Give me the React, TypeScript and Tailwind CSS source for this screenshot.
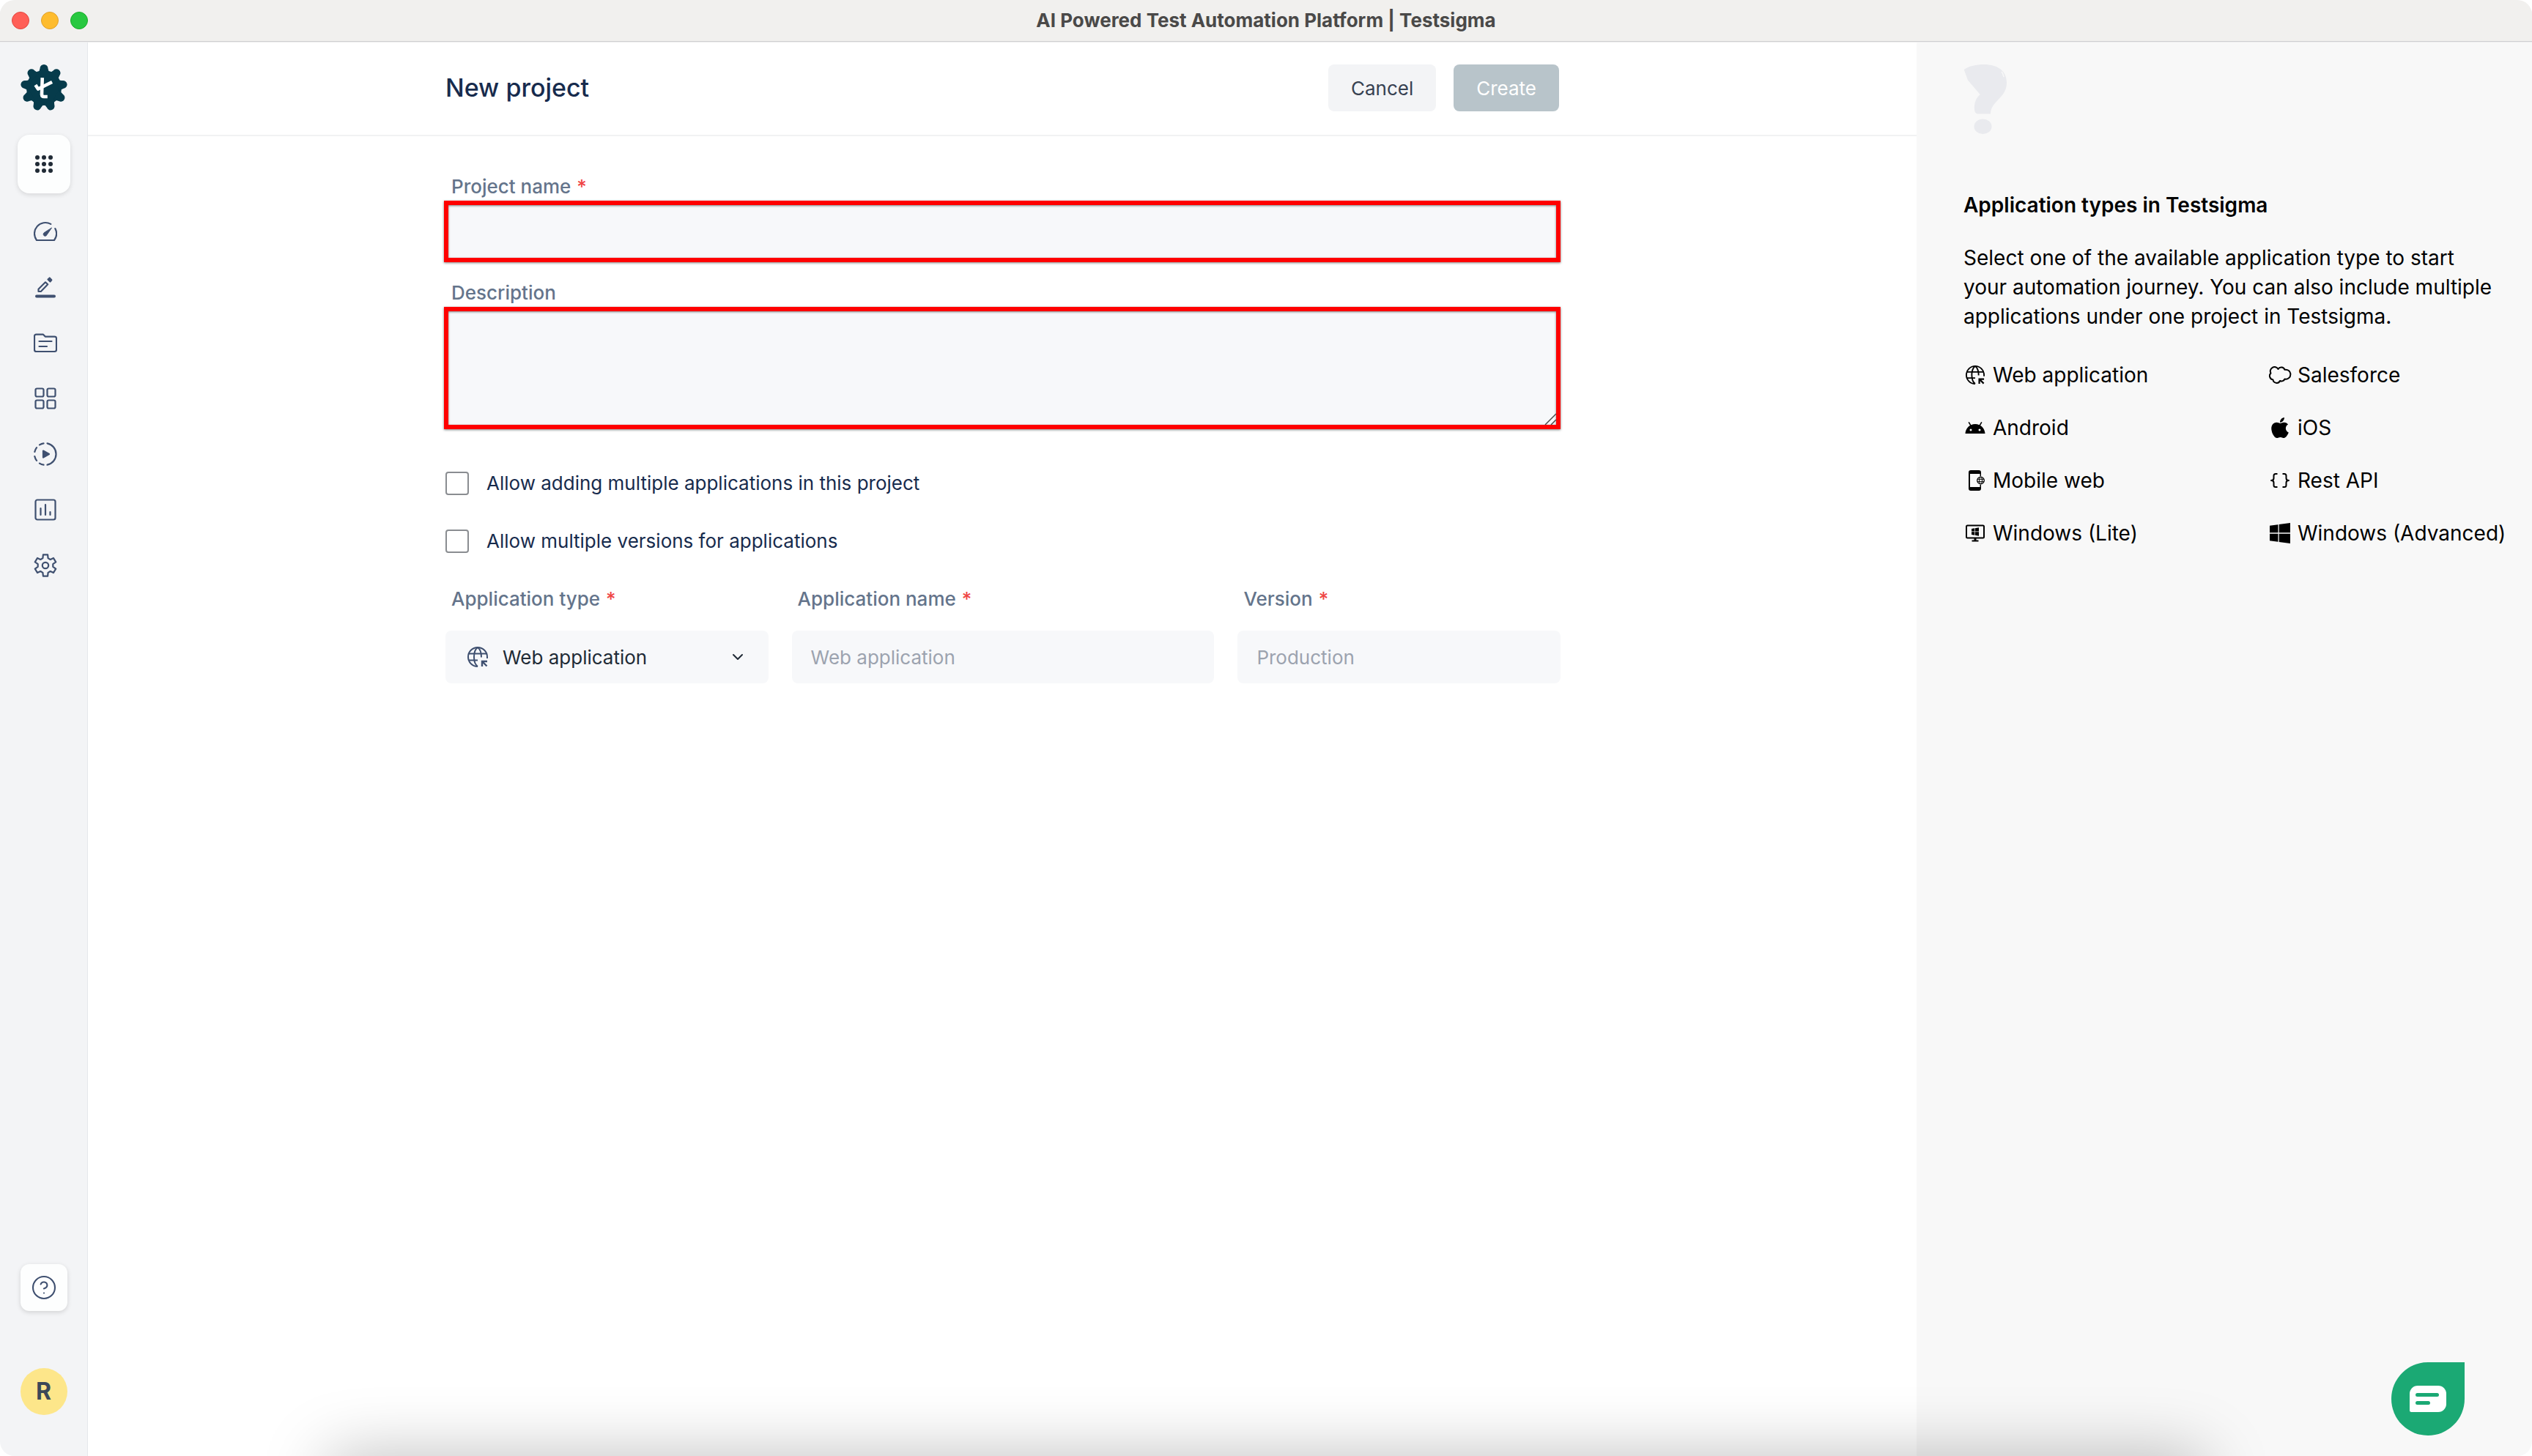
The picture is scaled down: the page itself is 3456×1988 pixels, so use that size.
import type { ReactNode, SVGProps } from "react";
import { ChevronDown, CircleHelp } from "lucide-react";
import { FaApple, FaWindows } from "react-icons/fa";

const LOBES = [0, 40, 80, 120, 160, 200, 240, 280, 320];

function Logo() {
  return (
    <svg viewBox="0 0 64 64" className="size-16">
      <circle cx="32" cy="32" r="24" fill="#063b4b" />
      {LOBES.map((a) => (
        <path key={a} d="M23 13 Q26 10 26.500 5.500 A5.500 5.500 0 0 1 37.500 5.500 Q38 10 41 13 Z" fill="#063b4b" transform={`rotate(${a} 32 32)`} />
      ))}
      <g fill="none" stroke="#fff" strokeWidth="4.600" strokeLinecap="square" strokeLinejoin="round">
        <path d="M29.700 20.500 L29 41 Q29.200 44 32 44 H34.500" />
        <path d="M21.700 30 L24 33.500 L41 25" />
      </g>
    </svg>
  );
}

function NavSvg({ children, ...props }: SVGProps<SVGSVGElement>) {
  return (
    <svg
      viewBox="0 0 32 32"
      className="size-8"
      fill="none"
      stroke="#3f5070"
      strokeWidth="2.200"
      strokeLinecap="round"
      strokeLinejoin="round"
      {...props}
    >
      {children}
    </svg>
  );
}

function AppsIcon() {
  return (
    <svg viewBox="0 0 24 24" className="size-6" fill="#212b36">
      {[3, 12, 21].map((y) => [3, 12, 21].map((x) => <circle key={`${x}-${y}`} cx={x} cy={y} r="3" />))}
    </svg>
  );
}

function GlobeCursor({ className }: { className: string }) {
  return (
    <svg viewBox="0 0 28 28" className={className} fill="none" stroke="currentColor" strokeWidth="2">
      <path d="M14 27 A13 13 0 1 1 27 14 V16" />
      <path d="M14 27 C10.500 24.500 9 19.500 9 14 C9 8 10.500 3.500 14 1 C17.500 3.500 19 8 19 14.500" />
      <path d="M2 9.500 H26 M2 18.500 H14" />
      <path d="M20 27 V20 H27 M20.500 20.500 L26.500 26.500" strokeWidth="2.400" />
    </svg>
  );
}

function AndroidIcon() {
  return (
    <svg viewBox="0 0 28 28" className="size-7">
      <path d="M0.500 22 C1 16.500 3.500 13 7 11 L4.500 6.700 L5.800 6 L8.400 10.200 C12 8.700 16 8.700 19.600 10.200 L22.200 6 L23.500 6.700 L21 11 C24.500 13 27 16.500 27.500 22 Z" fill="#000" />
      <circle cx="8" cy="17" r="1.500" fill="#f8f8f8" />
      <circle cx="20" cy="17" r="1.500" fill="#f8f8f8" />
    </svg>
  );
}

function MobileWebIcon() {
  return (
    <svg viewBox="0 0 28 28" className="size-7" fill="none" stroke="#000">
      <path d="M22 8 V3 Q22 0 19 0 H8 Q5 0 5 3 V25 Q5 28 8 28 H19 Q22 28 22 25 V20 H20.500 V23 H7 V5 H20.500 V8 Z" fill="#000" stroke="none" />
      <circle cx="21.500" cy="14" r="4.800" strokeWidth="1.300" />
      <ellipse cx="21.500" cy="14" rx="2" ry="4.800" />
      <path d="M17 12.300 H26 M17 15.700 H26" />
    </svg>
  );
}

function WindowsLiteIcon() {
  return (
    <svg viewBox="0 0 28 28" className="size-7" fill="#000">
      <rect x="2" y="3.500" width="24" height="17" rx="1.500" fill="none" stroke="#000" strokeWidth="2" />
      <path d="M12.500 20 H15.500 V23.500 H18.500 V25.500 H9.500 V23.500 H12.500 Z" />
      <path d="M9 8 L13 7.300 V11.600 H9 Z M13.700 7.200 L19 6.300 V11.600 H13.700 Z M9 12.300 H13 V16.700 L9 16 Z M13.700 12.300 H19 V17.700 L13.700 16.800 Z" />
    </svg>
  );
}

function SalesforceIcon() {
  return (
    <svg viewBox="0 0 32 24" className="h-6 w-8" fill="none" stroke="#000" strokeWidth="2" strokeLinejoin="round">
      <path d="M13.500 4 A5.500 5.500 0 0 0 3.500 9.500 A5.300 5.300 0 0 0 6.500 18.500 A5 5 0 0 0 16 20 A4.800 4.800 0 0 0 22.500 17.500 A6.500 6.500 0 1 0 22.500 4.800 A5 5 0 0 0 13.500 4 Z" />
    </svg>
  );
}

function BracesIcon() {
  return (
    <svg viewBox="0 0 28 28" className="size-7" fill="none" stroke="#000" strokeWidth="2" strokeLinejoin="round">
      <path d="M10.500 5 H8 Q5.500 5 5.500 7.500 V11 Q5.500 14 2 14 Q5.500 14 5.500 17 V20.500 Q5.500 23 8 23 H10.500" />
      <path d="M17.500 5 H20 Q22.500 5 22.500 7.500 V11 Q22.500 14 26 14 Q22.500 14 22.500 17 V20.500 Q22.500 23 20 23 H17.500" />
    </svg>
  );
}

function QuestionArt() {
  return (
    <svg viewBox="0 0 60 96" className="h-24 w-[60px]" fill="#e9eaee">
      <path d="M0.700 7 C8 2 17 0 28 0 C47 0 59 9 59 25 C59 46 37 50 37 67.500 H19 Q15.500 66.500 15 62 C14.500 52 17 46 22.700 41 L6 21.500 Z" />
      <ellipse cx="26.500" cy="84.700" rx="12" ry="10.300" />
      <path d="M52 10 Q54 12 55 17" fill="none" stroke="#f8f8f8" strokeWidth="1.600" />
    </svg>
  );
}

const navItems: { label: string; icon: ReactNode }[] = [
  {
    label: "Dashboard",
    icon: (
      <NavSvg>
        <path d="M23.300 5.900 A15 15 0 0 0 4 28 H28 A15 15 0 0 0 29.300 12.100" />
        <path d="M24.300 11.400 L18 20.500 A2.500 2.500 0 1 1 14.500 17.500 Z" fill="#3f5070" strokeWidth="1" />
      </NavSvg>
    ),
  },
  {
    label: "Create tests",
    icon: (
      <NavSvg>
        <path d="M6.500 22 V18.700 L16 9.300 L19.200 12.300 L9.800 22 Z" />
        <path d="M19.500 5.500 L21.700 3.500 L24.300 6.300 L22.500 8.500 Z" fill="#3f5070" />
        <path d="M4 28.500 H28" strokeWidth="4" />
      </NavSvg>
    ),
  },
  {
    label: "Test plans",
    icon: (
      <NavSvg>
        <path d="M3.500 4.700 H13 L16 7.700 H28.500 Q31 7.700 31 10 V25.500 Q31 28 28.500 28 H3.500 Q1 28 1 25.500 V7 Q1 4.700 3.500 4.700 Z" />
        <path d="M7.500 14 H24.500 M7.500 21 H18" />
      </NavSvg>
    ),
  },
  {
    label: "Elements",
    icon: (
      <NavSvg>
        <rect x="2.500" y="2.500" width="11" height="11" rx="2" />
        <rect x="18.500" y="2.500" width="11" height="11" rx="2" />
        <rect x="2.500" y="18.500" width="11" height="11" rx="2" />
        <rect x="18.500" y="18.500" width="11" height="11" rx="2" />
      </NavSvg>
    ),
  },
  {
    label: "Run results",
    icon: (
      <NavSvg>
        <path d="M18.500 1.300 A15 15 0 0 1 18.500 30.700" />
        <path d="M13.500 1.300 A15 15 0 0 0 8 3.400 M4 7.200 A15 15 0 0 0 1.300 13 M1.300 19 A15 15 0 0 0 4 24.800 M8 28.600 A15 15 0 0 0 13.500 30.700" />
        <path d="M13 11.500 L21 16 L13 20.500 Z" fill="#3f5070" />
      </NavSvg>
    ),
  },
  {
    label: "Reports",
    icon: (
      <NavSvg>
        <rect x="2.500" y="2.500" width="27" height="27" rx="2.500" />
        <path d="M9.500 14 V23 M16 9 V23 M22.500 19 V23" />
      </NavSvg>
    ),
  },
  {
    label: "Settings",
    icon: (
      <NavSvg>
        <path d="M12.900 1.400 H19.100 L19.600 6.100 L22.700 8 L27 6 L30.200 11.400 L26.300 14.200 V17.800 L30.200 20.600 L27 26 L22.700 24 L19.600 25.900 L19.100 30.600 H12.900 L12.400 25.900 L9.300 24 L5 26 L1.800 20.600 L5.700 17.800 V14.200 L1.800 11.400 L5 6 L9.300 8 L12.400 6.100 Z" />
        <circle cx="16" cy="16" r="4.200" />
      </NavSvg>
    ),
  },
];

const appTypes: { label: string; icon: ReactNode }[] = [
  { label: "Web application", icon: <GlobeCursor className="size-[26px]" /> },
  { label: "Salesforce", icon: <SalesforceIcon /> },
  { label: "Android", icon: <AndroidIcon /> },
  { label: "iOS", icon: <FaApple className="size-8" /> },
  { label: "Mobile web", icon: <MobileWebIcon /> },
  { label: "Rest API", icon: <BracesIcon /> },
  { label: "Windows (Lite)", icon: <WindowsLiteIcon /> },
  { label: "Windows (Advanced)", icon: <FaWindows className="size-8" /> },
];

const fieldBox = "h-18 w-full rounded-lg bg-[#f7f8fa] outline-none";
const markedBox = "block w-full border-6 border-[#ff0000] bg-[#f7f8fa] px-6 outline-none shadow-[0_1px_3px_rgba(0,0,0,0.5),inset_0_1px_3px_rgba(0,0,0,0.5)]";

function FieldLabel({ htmlFor, required, children }: { htmlFor: string; required?: boolean; children: ReactNode }) {
  return (
    <label htmlFor={htmlFor} className="block font-medium leading-8 text-[#64748b]">
      {children}
      {required && <span className="ml-2 text-[#ef4444]">*</span>}
    </label>
  );
}

function CheckRow({ id, children }: { id: string; children: ReactNode }) {
  return (
    <div className="flex items-center gap-6">
      <input id={id} type="checkbox" className="size-8 appearance-none rounded-sm border-2 border-[#8a8d91] bg-white" />
      <label htmlFor={id} className="leading-8 text-[#172b4d]">
        {children}
      </label>
    </div>
  );
}

function TitleBar() {
  return (
    <header className="mb-px grid h-[57px] grid-cols-[1fr_auto_1fr] items-center border-b border-[#cfcfd1] bg-[#f1f0ee] px-4 shadow-[0_1px_0_#ededed]">
      <div className="flex gap-4">
        <span className="size-6 rounded-full border border-[#e2463f] bg-[#ff5f57]" />
        <span className="size-6 rounded-full border border-[#e0a02a] bg-[#febc2e]" />
        <span className="size-6 rounded-full border border-[#1aab29] bg-[#28c840]" />
      </div>
      <p className="text-[26px] leading-8 font-bold text-[#4a4948]">AI Powered Test Automation Platform | Testsigma</p>
    </header>
  );
}

function Sidebar() {
  return (
    <aside className="flex w-[120px] shrink-0 flex-col items-center border-r border-[#e5e7eb] bg-[#f3f4f6] pt-[30px] pb-14">
      <a href="#home" aria-label="Home">
        <Logo />
      </a>
      <button
        type="button"
        aria-label="Apps"
        className="mt-8 flex h-20 w-18 shrink-0 items-center justify-center rounded-2xl bg-[#fdfefe] shadow-[0_2px_6px_rgba(0,0,0,0.12)]"
      >
        <AppsIcon />
      </button>
      <nav className="mt-9 flex flex-col gap-11 pl-1">
        {navItems.map((item) => (
          <a key={item.label} href="#nav" aria-label={item.label}>
            {item.icon}
          </a>
        ))}
      </nav>
      <button
        type="button"
        aria-label="Help"
        className="mt-auto flex size-16 shrink-0 items-center justify-center rounded-xl bg-[#fdfefe] shadow-[0_2px_6px_rgba(0,0,0,0.14)]"
      >
        <CircleHelp size={36} strokeWidth={1.4} color="#3f5070" />
      </button>
      <button
        type="button"
        aria-label="Profile"
        className="mt-[78px] flex size-16 shrink-0 items-center justify-center rounded-full bg-[#fde68a] text-[32px] leading-none font-bold text-[#3c4858]"
      >
        R
      </button>
    </aside>
  );
}

function ProjectForm() {
  return (
    <form className="mx-auto flex w-full max-w-[1524px] flex-col pt-[53px] text-[26px]">
      <div className="flex flex-col gap-[3px]">
        <div className="pl-2.5">
          <FieldLabel htmlFor="project-name" required>
            Project name
          </FieldLabel>
        </div>
        <input id="project-name" type="text" className={`${markedBox} h-21`} />
      </div>
      <div className="mt-[26px] flex flex-col gap-[3px]">
        <div className="pl-2.5">
          <FieldLabel htmlFor="description">Description</FieldLabel>
        </div>
        <div className="relative">
          <textarea id="description" className={`${markedBox} h-[167px] resize-none`} />
          <svg viewBox="0 0 16 16" className="pointer-events-none absolute right-1.5 bottom-1.5 size-4" stroke="#4b4b4b" strokeWidth="1.500">
            <path d="M1 16 L16 1 M9 16 L16 9" />
          </svg>
        </div>
      </div>
      <div className="mt-[58px] flex flex-col gap-[47px] pl-0.5">
        <CheckRow id="multi-apps">Allow adding multiple applications in this project</CheckRow>
        <CheckRow id="multi-versions">Allow multiple versions for applications</CheckRow>
      </div>
      <div className="mt-[47px] grid grid-cols-[55fr_72fr_55fr] gap-8 pl-0.5">
        <div className="flex flex-col gap-[27px]">
          <div className="pl-2">
            <FieldLabel htmlFor="app-type" required>
              Application type
            </FieldLabel>
          </div>
          <div className="relative">
            <select id="app-type" className={`${fieldBox} appearance-none pl-19.5 text-[#212b36]`}>
              <option>Web application</option>
            </select>
            <GlobeCursor className="pointer-events-none absolute top-5.5 left-7.5 size-7 text-[#3f5070]" />
            <ChevronDown className="pointer-events-none absolute top-6 right-7.5 size-6 text-[#212b36]" />
          </div>
        </div>
        <div className="flex flex-col gap-[27px]">
          <div className="pl-2">
            <FieldLabel htmlFor="app-name" required>
              Application name
            </FieldLabel>
          </div>
          <input id="app-name" type="text" placeholder="Web application" className={`${fieldBox} px-6.5 placeholder:text-[#9ca3af]`} />
        </div>
        <div className="flex flex-col gap-[27px]">
          <div className="pl-2">
            <FieldLabel htmlFor="version" required>
              Version
            </FieldLabel>
          </div>
          <input id="version" type="text" placeholder="Production" className={`${fieldBox} px-6.5 placeholder:text-[#9ca3af]`} />
        </div>
      </div>
    </form>
  );
}

function HelpPanel() {
  return (
    <aside className="w-[840px] shrink-0 bg-[#f8f8f8] pt-[30px] pr-8 pl-16 text-[28px] leading-10 text-black">
      <QuestionArt />
      <h2 className="mt-[76px] font-semibold">Application types in Testsigma</h2>
      <p className="mt-8 max-w-[730px]">
        Select one of the available application type to start your automation journey. You can also include multiple
        applications under one project in Testsigma.
      </p>
      <ul className="mt-10 grid grid-cols-[416px_1fr] gap-y-8">
        {appTypes.map((t) => (
          <li key={t.label} className="flex items-center gap-2">
            <span className="flex w-8 shrink-0 justify-center">{t.icon}</span>
            <span className="whitespace-nowrap">{t.label}</span>
          </li>
        ))}
      </ul>
    </aside>
  );
}

export default function App() {
  return (
    <div className="relative flex min-h-screen flex-col overflow-hidden rounded-[20px] bg-white font-['Inter',sans-serif]">
      <TitleBar />
      <div className="flex grow">
        <Sidebar />
        <main className="grow">
          <div className="border-b-2 border-[#f1f2f3] pt-[30px] pb-8">
            <div className="mx-auto flex max-w-[1524px] items-center justify-between px-0.5">
              <h1 className="text-[34px] leading-10 font-medium text-[#172b4d]">New project</h1>
              <div className="flex gap-6 text-[26px]">
                <button type="button" className="h-16 rounded-lg bg-[#f3f4f6] px-[31px] text-[#374151]">
                  Cancel
                </button>
                <button type="submit" className="h-16 rounded-lg bg-[#b8c4ca] px-[31px] text-white">
                  Create
                </button>
              </div>
            </div>
          </div>
          <ProjectForm />
        </main>
        <HelpPanel />
      </div>

      {/* Shade rising from the lower edge */}
      <div className="pointer-events-none absolute inset-x-[13%] top-full h-20 shadow-[0_0_90px_rgba(0,0,0,0.27)]" />

      <button
        type="button"
        aria-label="Open chat"
        className="absolute right-23 bottom-7 flex size-25 items-center justify-center rounded-full rounded-tr-[10px] bg-[#1ba974]"
      >
        <svg viewBox="0 0 50 36" className="h-9 w-[50px]">
          <path d="M11 0 H39 A11 11 0 0 1 50 11 V25 A11 11 0 0 1 39 36 H2.500 A2.500 2.500 0 0 1 0 33.500 V11 A11 11 0 0 1 11 0 Z" fill="#fff" />
          <path d="M10.500 12.500 H37.500 M10.500 23.500 H25.500" stroke="#1ba974" strokeWidth="5" strokeLinecap="round" />
        </svg>
      </button>
    </div>
  );
}
